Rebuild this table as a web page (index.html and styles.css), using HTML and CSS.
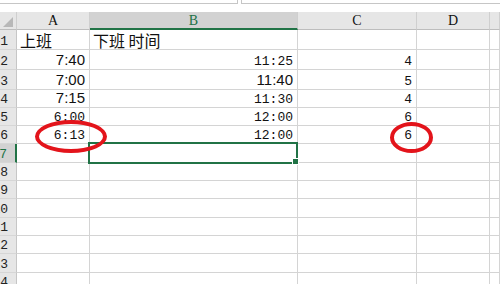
FILE: index.html
```html
<!DOCTYPE html>
<html lang="zh-CN">
<head>
    <meta charset="UTF-8">
    <title>工作表</title>
    <link rel="stylesheet" href="styles.css">
</head>
<body>

<div class="sheet">
    <!-- 编辑栏底边 -->
    <div class="bar">
        <div class="namebox"></div>
        <div class="formula"></div>
    </div>

    <!-- 列标题 -->
    <div class="row hdr">
        <div class="cell rh corner"><span class="tri"></span></div>
        <div class="cell ca">A</div>
        <div class="cell cb on">B</div>
        <div class="cell cc">C</div>
        <div class="cell cd">D</div>
        <div class="cell ce"></div>
    </div>

    <div class="row h20">
        <div class="cell rh">1</div>
        <div class="cell ca txt">上班</div>
        <div class="cell cb txt">下班 时间</div>
        <div class="cell cc"></div>
        <div class="cell cd"></div>
        <div class="cell ce"></div>
    </div>
    <div class="row h20">
        <div class="cell rh">2</div>
        <div class="cell ca sans">7:40</div>
        <div class="cell cb">11:25</div>
        <div class="cell cc">4</div>
        <div class="cell cd"></div>
        <div class="cell ce"></div>
    </div>
    <div class="row h20">
        <div class="cell rh">3</div>
        <div class="cell ca sans">7:00</div>
        <div class="cell cb sans">11:40</div>
        <div class="cell cc">5</div>
        <div class="cell cd"></div>
        <div class="cell ce"></div>
    </div>
    <div class="row h18">
        <div class="cell rh">4</div>
        <div class="cell ca sans">7:15</div>
        <div class="cell cb">11:30</div>
        <div class="cell cc">4</div>
        <div class="cell cd"></div>
        <div class="cell ce"></div>
    </div>
    <div class="row h18">
        <div class="cell rh">5</div>
        <div class="cell ca">6:00</div>
        <div class="cell cb">12:00</div>
        <div class="cell cc">6</div>
        <div class="cell cd"></div>
        <div class="cell ce"></div>
    </div>
    <div class="row h18">
        <div class="cell rh">6</div>
        <div class="cell ca">6:13</div>
        <div class="cell cb">12:00</div>
        <div class="cell cc">6</div>
        <div class="cell cd"></div>
        <div class="cell ce"></div>
    </div>
    <div class="row h19">
        <div class="cell rh on">7</div>
        <div class="cell ca"></div>
        <div class="cell cb"></div>
        <div class="cell cc"></div>
        <div class="cell cd"></div>
        <div class="cell ce"></div>
    </div>
    <div class="row h18">
        <div class="cell rh">8</div>
        <div class="cell ca"></div><div class="cell cb"></div><div class="cell cc"></div><div class="cell cd"></div><div class="cell ce"></div>
    </div>
    <div class="row h18">
        <div class="cell rh">9</div>
        <div class="cell ca"></div><div class="cell cb"></div><div class="cell cc"></div><div class="cell cd"></div><div class="cell ce"></div>
    </div>
    <div class="row h19">
        <div class="cell rh">10</div>
        <div class="cell ca"></div><div class="cell cb"></div><div class="cell cc"></div><div class="cell cd"></div><div class="cell ce"></div>
    </div>
    <div class="row h18">
        <div class="cell rh">11</div>
        <div class="cell ca"></div><div class="cell cb"></div><div class="cell cc"></div><div class="cell cd"></div><div class="cell ce"></div>
    </div>
    <div class="row h18">
        <div class="cell rh">12</div>
        <div class="cell ca"></div><div class="cell cb"></div><div class="cell cc"></div><div class="cell cd"></div><div class="cell ce"></div>
    </div>
    <div class="row h19">
        <div class="cell rh">13</div>
        <div class="cell ca"></div><div class="cell cb"></div><div class="cell cc"></div><div class="cell cd"></div><div class="cell ce"></div>
    </div>
    <div class="row h18">
        <div class="cell rh">14</div>
        <div class="cell ca"></div><div class="cell cb"></div><div class="cell cc"></div><div class="cell cd"></div><div class="cell ce"></div>
    </div>

    <!-- 选中的单元格 B7 -->
    <div class="sel"></div>
    <div class="handle"></div>

    <!-- 红色圈注 -->
    <div class="mark m1"></div>
    <div class="mark m2"></div>
</div>

</body>
</html>
```

FILE: styles.css
```css
body {
    margin: 0;
    overflow: hidden;
    background: #fff;
    font-family: "Liberation Mono", "Noto Sans CJK SC", monospace;
    font-size: 13px;
    color: #111;
}
.sheet {
    position: relative;
    width: 500px;
    height: 284px;
    overflow: hidden;
}

/* 编辑栏 */
.bar {
    height: 12px;
    display: flex;
    background: #fff;
}
.namebox {
    width: 238px;
    height: 4px;
    box-sizing: border-box;
    border-bottom: 1px solid #c6c6c6;
    border-right: 1px solid #c6c6c6;
}
.formula {
    flex: 1;
    height: 4px;
    margin-left: 3px;
    box-sizing: border-box;
    border-bottom: 1px solid #c6c6c6;
    border-left: 1px solid #c6c6c6;
}

/* 行 */
.row {
    display: flex;
}
.h18 { height: 18px; }
.h19 { height: 19px; }
.h20 { height: 20px; }

.cell {
    box-sizing: border-box;
    flex-shrink: 0;
    display: flex;
    align-items: flex-end;
    justify-content: flex-end;
    padding: 0 4px 1px 0;
    border-right: 1px solid #d4d4d4;
    border-bottom: 1px solid #d4d4d4;
    white-space: nowrap;
    line-height: 13px;
}
.ca { width: 73px; }
.cb { width: 208px; }
.cc { width: 119px; }
.cd { width: 73px; }
.ce { flex: 1; flex-shrink: 1; }

.cell.txt {
    justify-content: flex-start;
    padding: 0 0 0 3px;
    font-family: "Noto Sans CJK SC", sans-serif;
    font-size: 16px;
    line-height: 18px;
}
.cell.sans {
    font-family: "Liberation Sans", sans-serif;
    font-size: 15px;
    line-height: 15px;
    padding-bottom: 2px;
}

/* 行号，列太窄，两位数只露出末位 */
.rh {
    width: 17px;
    padding: 0 8px 1px 0;
    overflow: hidden;
    background: #e6e6e6;
    border-right-color: #c6c6c6;
    border-bottom-color: #d6d6d6;
    color: #222;
}
.rh.on {
    background: #d2d2d2;
    color: #217346;
    border-right: 2px solid #217346;
}

/* 列标题 */
.hdr {
    height: 18px;
}
.hdr .cell {
    background: #e6e6e6;
    justify-content: center;
    align-items: center;
    padding: 0;
    font-family: "Liberation Serif", serif;
    font-size: 14px;
    border-right-color: #cfcfcf;
    border-bottom-color: #bdbdbd;
}
.hdr .cell.on {
    background: #d2d2d2;
    color: #217346;
    border-bottom: 2px solid #217346;
}
.corner {
    position: relative;
}
.tri {
    position: absolute;
    right: 3px;
    bottom: 2px;
    width: 0;
    height: 0;
    border-left: 10px solid transparent;
    border-bottom: 10px solid #b8b8b8;
}

/* 选区 */
.sel {
    position: absolute;
    left: 88px;
    top: 142px;
    width: 210px;
    height: 22px;
    box-sizing: border-box;
    border: 2px solid #217346;
}
.handle {
    position: absolute;
    left: 292px;
    top: 158px;
    width: 7px;
    height: 7px;
    box-sizing: border-box;
    background: #217346;
    border: 1px solid #fff;
}

/* 红圈 */
.mark {
    position: absolute;
    box-sizing: border-box;
    border: 4px solid #e3141b;
    border-radius: 50%;
}
.m1 {
    left: 35px;
    top: 120px;
    width: 72px;
    height: 33px;
}
.m2 {
    left: 390px;
    top: 122px;
    width: 43px;
    height: 31px;
}
```
